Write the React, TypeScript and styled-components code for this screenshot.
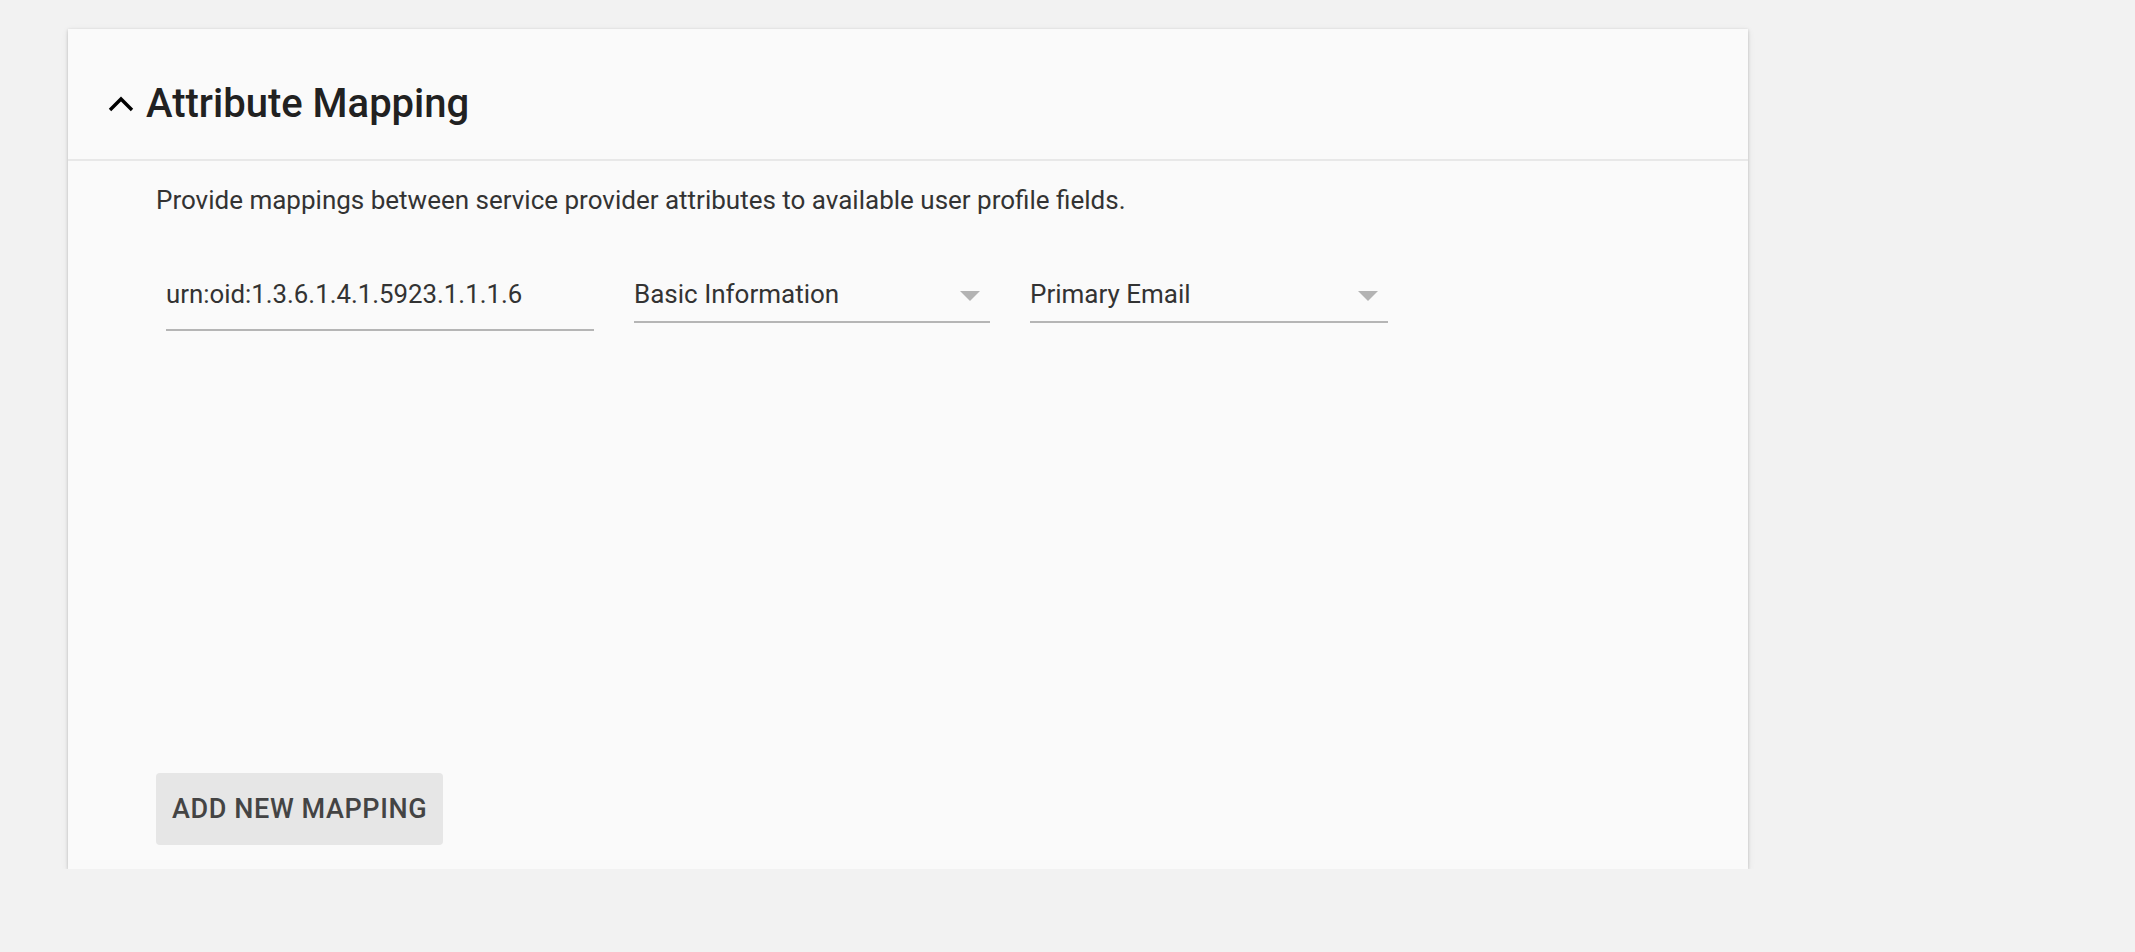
import React from 'react';
import styled, { createGlobalStyle } from 'styled-components';

const GlobalStyle = createGlobalStyle`
  html, body {
    margin: 0;
    padding: 0;
    background: #f2f2f2;
    font-family: Roboto, "Liberation Sans", Arial, sans-serif;
  }
`;

const Page = styled.div`
  padding: 29px 0 0 68px;
`;

const Card = styled.section`
  width: 1680px;
  height: 840px;
  box-sizing: border-box;
  background: #fafafa;
  box-shadow: 0 1px 3px rgba(0, 0, 0, 0.2), 0 2px 8px rgba(0, 0, 0, 0.07);
  display: flex;
  flex-direction: column;
`;

const Header = styled.div`
  display: flex;
  align-items: center;
  gap: 12px;
  padding: 51px 40px 31px;
  border-bottom: 2px solid #e8e8e8;
`;

const Title = styled.h2`
  margin: 0;
  font-size: 40px;
  line-height: 48px;
  font-weight: 500;
  color: #212121;
`;

const Body = styled.div`
  flex: 1;
  display: flex;
  flex-direction: column;
  padding: 19px 88px 24px;
`;

const Description = styled.p`
  margin: 0;
  font-size: 26px;
  line-height: 40px;
  color: #333;
`;

const MappingRow = styled.div`
  display: flex;
  align-items: flex-start;
  gap: 40px;
  margin-top: 54px;
  padding-left: 10px;
`;

const TextField = styled.input`
  width: 428px;
  box-sizing: border-box;
  padding: 0 0 15px;
  border: none;
  border-bottom: 2px solid #b5b5b5;
  background: transparent;
  font-family: inherit;
  font-size: 25.8px;
  line-height: 40px;
  height: 57px;
  color: #333;
  outline: none;
`;

const Select = styled.div<{ $width: number }>`
  width: ${(p) => p.$width}px;
  box-sizing: border-box;
  display: flex;
  align-items: center;
  justify-content: space-between;
  padding: 0 10px 7px 0;
  border-bottom: 2px solid #b5b5b5;
  font-size: 26px;
  line-height: 40px;
  color: #333;
`;

const Caret = styled.span`
  width: 0;
  height: 0;
  border-left: 10px solid transparent;
  border-right: 10px solid transparent;
  border-top: 10px solid #b3b3b3;
  margin-top: 4px;
`;

const AddButton = styled.button`
  margin-top: auto;
  align-self: flex-start;
  height: 72px;
  padding: 0 16px;
  border: none;
  border-radius: 4px;
  background: #e6e6e6;
  color: #444;
  font-family: inherit;
  font-size: 27px;
  font-weight: 500;
  letter-spacing: 0.6px;
  text-transform: uppercase;
  cursor: pointer;
`;

function ChevronUp() {
  return (
    <svg width="26" height="16" viewBox="0 0 26 16" fill="none">
      <path d="M2 14L13 3l11 11" stroke="#000" strokeWidth="3.4" />
    </svg>
  );
}

export default function App() {
  return (
    <>
      <GlobalStyle />
      <Page>
        <Card>
          <Header>
            <ChevronUp />
            <Title>Attribute Mapping</Title>
          </Header>
          <Body>
            <Description>
              Provide mappings between service provider attributes to available user profile fields.
            </Description>
            <MappingRow>
              <TextField readOnly value="urn:oid:1.3.6.1.4.1.5923.1.1.1.6" />
              <Select $width={356}>
                <span>Basic Information</span>
                <Caret />
              </Select>
              <Select $width={358}>
                <span>Primary Email</span>
                <Caret />
              </Select>
            </MappingRow>
            <AddButton>Add New Mapping</AddButton>
          </Body>
        </Card>
      </Page>
    </>
  );
}
